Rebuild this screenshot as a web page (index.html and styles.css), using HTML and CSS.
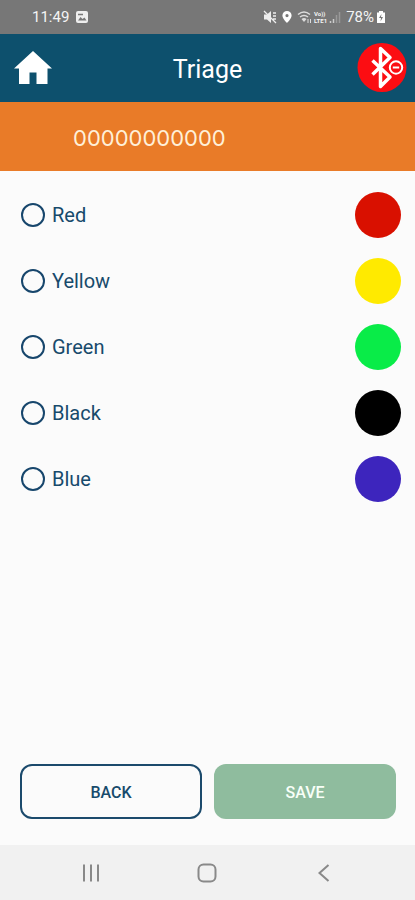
FILE: index.html
```html
<!DOCTYPE html>
<html lang="en">
<head>
<meta charset="utf-8">
<meta name="viewport" content="width=device-width, initial-scale=1">
<title>Triage</title>
<link rel="stylesheet" href="styles.css">
</head>
<body>
<div class="status">
  <div class="status-group">
    <span>11:49</span>
    <svg width="14" height="14" viewBox="0 0 14 14"><rect x="1" y="1" width="12" height="12" rx="2" fill="#eee"/><path d="M3 10.500L5.500 7l2 2L9.500 7.500l2 3z" fill="#777"/><path d="M3 4.500h5" stroke="#777" stroke-width="1.500"/></svg>
  </div>
  <div class="status-group status-right">
    <svg width="14" height="14" viewBox="0 0 14 14"><path d="M1 4.500h3L8 1v12L4 9.500H1z" fill="#eee"/><path d="M1 1l12 12M10 3h3M10 6h3M10 9h3" stroke="#eee" stroke-width="1.300" fill="none"/></svg>
    <svg class="pin" width="10" height="14" viewBox="0 0 10 14"><path fill-rule="evenodd" d="M5 1a4.600 4.600 0 0 0-4.600 4.600C.4 9 5 13 5 13s4.600-4 4.600-7.400A4.600 4.600 0 0 0 5 1zm0 3a1.600 1.600 0 1 1 0 3.200A1.600 1.600 0 0 1 5 4z" fill="#fff"/></svg>
    <svg width="15" height="14" viewBox="0 0 15 14"><path d="M1 4.500q6-5 12 0M3 7q4-3.200 8 0" stroke="#ddd" stroke-width="1.500" fill="none"/><path d="M7 12L4.500 9q2.500-1.800 5 0z" fill="#ddd"/><path d="M11 9v4M13.500 9v4" stroke="#ddd"/></svg>
    <span class="volte"><span>Vo))</span><span>LTE1</span></span>
    <svg width="12" height="14" viewBox="0 0 12 14"><path d="M1.500 11v2M4.500 9v4" stroke="#ccc" stroke-width="1.500"/><path d="M7.500 5v8M10.500 2v11" stroke="#999" stroke-width="1.500"/></svg>
    <span class="percent">78%</span>
    <svg width="10" height="14" viewBox="0 0 10 14"><path d="M3 1h4v1.500h2V13H1V2.500h2z" fill="#fff"/><path d="M5.500 4L3 8h2L4.500 11.500 7 7H5z" fill="#777"/></svg>
  </div>
</div>
<header class="header">
  <a class="home" href="#" aria-label="Home"><svg width="38" height="34" viewBox="0 0 38 34"><path d="M19 0L38 17.500H33.500V33H22.500V21.500H15.500V33H5V17.500H0z" fill="#fff"/></svg></a>
  <h1>Triage</h1>
  <button class="bluetooth" type="button" aria-label="Bluetooth disconnected"><svg width="50" height="50" viewBox="0 0 50 50"><circle cx="25" cy="24.500" r="24.500" fill="#fc0d12"/><path d="M15.500 17.500L33 34 23.500 43.500V5.500L33 14.500 15.500 31.500" fill="none" stroke="#fff" stroke-width="3.500" stroke-linejoin="round"/><circle cx="39" cy="24.500" r="8" fill="#fc0d12"/><circle cx="39" cy="24.500" r="6.200" fill="none" stroke="#fff" stroke-width="2"/><path d="M35.800 24.500h6.400" stroke="#fff" stroke-width="2"/></svg></button>
</header>
<div class="code">00000000000</div>
<form class="form">
  <div class="options">
    <label class="option"><input type="radio" name="level"><span>Red</span><i class="dot red"></i></label>
    <label class="option"><input type="radio" name="level"><span>Yellow</span><i class="dot yellow"></i></label>
    <label class="option"><input type="radio" name="level"><span>Green</span><i class="dot green"></i></label>
    <label class="option"><input type="radio" name="level"><span>Black</span><i class="dot black"></i></label>
    <label class="option"><input type="radio" name="level"><span>Blue</span><i class="dot blue"></i></label>
  </div>
  <div class="actions">
    <button class="btn back" type="button">BACK</button>
    <button class="btn save" type="submit">SAVE</button>
  </div>
</form>
<nav class="nav">
  <button type="button" aria-label="Recent apps"><svg width="20" height="20" viewBox="0 0 20 20"><path d="M3 1.500v17M10 1.500v17M17 1.500v17" stroke="#898989" stroke-width="2"/></svg></button>
  <button type="button" aria-label="Home screen"><svg width="20" height="20" viewBox="0 0 20 20"><rect x="1.500" y="1.500" width="17" height="17" rx="5" fill="none" stroke="#898989" stroke-width="2"/></svg></button>
  <button type="button" aria-label="Go back"><svg width="20" height="20" viewBox="0 0 20 20"><path d="M14.500 2L5.500 10l9 8" fill="none" stroke="#898989" stroke-width="2"/></svg></button>
</nav>
</body>
</html>
```
FILE: styles.css
```css
* { box-sizing: border-box; }
body {
  margin: 0;
  min-height: 100vh;
  display: flex;
  flex-direction: column;
  background: #fbfbfb;
  color: #174a6b;
  font-family: Roboto, "Liberation Sans", sans-serif;
}
svg { display: block; }
button { font: inherit; padding: 0; border: 0; background: none; }
.status {
  display: flex;
  justify-content: space-between;
  align-items: center;
  height: 34px;
  padding: 0 29px 0 32px;
  background: #777;
  color: #f4f4f4;
  font-size: 15px;
}
.status-group { display: flex; align-items: center; gap: 6px; }
.status-right { gap: 2px; }
.pin { margin: 0 3px; }
.volte { display: flex; flex-direction: column; font-size: 6px; line-height: 7px; font-weight: 700; }
.percent { margin-left: 3px; }
.header {
  display: grid;
  grid-template-columns: 1fr auto 1fr;
  align-items: center;
  height: 68px;
  padding: 0 8px;
  background: #0d506d;
}
.home { justify-self: start; margin-left: 6px; }
h1 { margin: 0; padding-top: 2px; color: #fff; font-size: 25px; font-weight: 400; }
.bluetooth { justify-self: end; }
.code {
  height: 69px;
  padding-left: 73px;
  background: #e97b28;
  color: #fff0d8;
  font: 400 22px/72px Inter, "Noto Sans", sans-serif;
}
.form { flex: 1; display: flex; flex-direction: column; justify-content: space-between; }
.options { padding: 11px 14px 0 21px; }
.option { display: flex; align-items: center; height: 66px; gap: 7px; font-size: 20px; }
.option input {
  appearance: none;
  width: 24px;
  height: 24px;
  margin: 0;
  border: 2px solid #17466c;
  border-radius: 50%;
}
.option input:checked { background: radial-gradient(#17466c 45%, transparent 50%); }
.dot { width: 46px; height: 46px; margin-left: auto; border-radius: 50%; }
.red { background: #d91000; }
.yellow { background: #ffea00; }
.green { background: #09ec48; }
.black { background: #000; }
.blue { background: #3d25bd; }
.actions { display: grid; grid-template-columns: 1fr 1fr; gap: 12px; padding: 0 19px 26px 20px; }
.btn { height: 55px; padding-top: 2px; border-radius: 12px; font-size: 16px; font-weight: 500; }
.back { border: 2px solid #1b4a6c; color: #174a6b; }
.save { background: #8fbc9e; color: #f8fff8; }
.nav {
  display: flex;
  justify-content: space-around;
  align-items: center;
  height: 55px;
  padding: 0 33px;
  background: #f1f1f1;
}
```
